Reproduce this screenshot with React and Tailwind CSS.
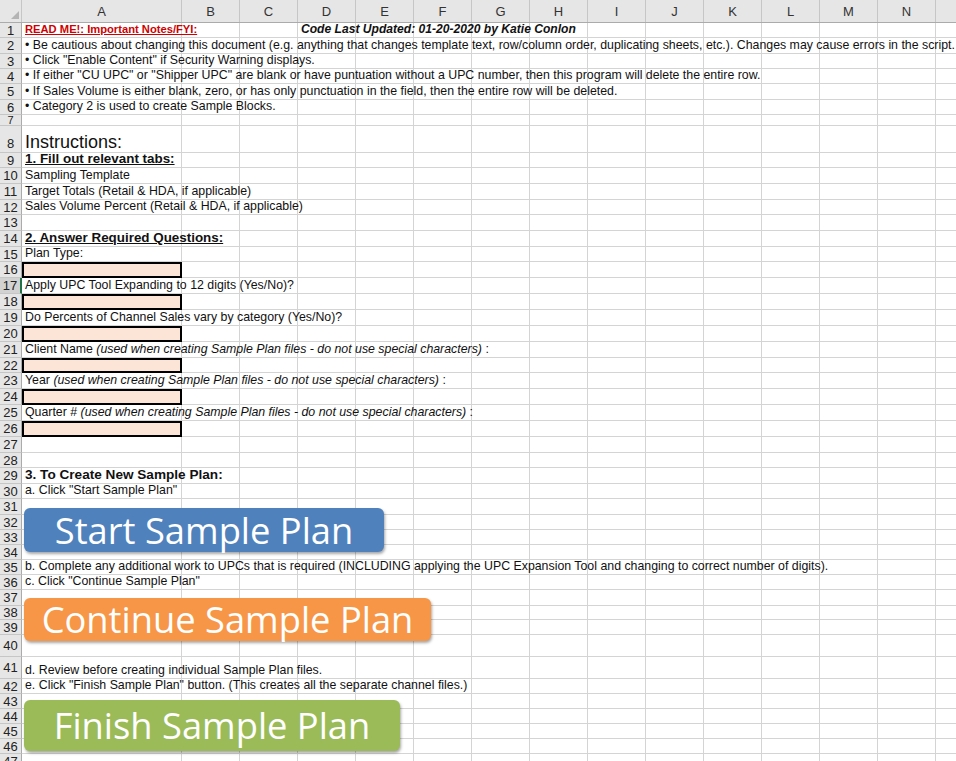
import React from 'react';

const COLS = ['B', 'C', 'D', 'E', 'F', 'G', 'H', 'I', 'J', 'K', 'L', 'M', 'N'];

const HEIGHTS = {
  11: 'h-[11px]',
  14: 'h-[14px]',
  15: 'h-[15px]',
  16: 'h-[16px]',
  22: 'h-[22px]',
  27: 'h-[27px]',
};

const it = (s) => <span className="italic">{s}</span>;

// row heights, top to bottom (rows 1..47)
const rowHeights = [
  15, 16, 15, 15, 16, 15, 11, 27, 15,
  16, 16, 15, 16, 16, 15, 16, 16,
  16, 16, 16, 16, 15, 16, 16, 16, 16,
  16,
  15, 16, 15, 16, 15, 15, 15, 15, 15, 16, 14, 15,
  22, 22,
  15, 15, 15, 15, 15, 15,
];

const inputRows = [16, 18, 20, 22, 24, 26];

const cells = {
  1: {
    A: <span className="font-bold underline text-[11.2px] text-[#d00000]">READ ME!: Important Notes/FYI:</span>,
    D: <span className="font-bold italic text-[12.1px]">Code Last Updated: 01-20-2020 by Katie Conlon</span>,
  },
  2: { A: '• Be cautious about changing this document (e.g. anything that changes template text, row/column order, duplicating sheets, etc.). Changes may cause errors in the script.' },
  3: { A: '• Click "Enable Content" if Security Warning displays.' },
  4: { A: '• If either "CU UPC" or "Shipper UPC" are blank or have puntuation without a UPC number, then this program will delete the entire row.' },
  5: { A: '• If Sales Volume is either blank, zero, or has only punctuation in the field, then the entire row will be deleted.' },
  6: { A: '• Category 2 is used to create Sample Blocks.' },
  8: { A: <span className="text-[18px] leading-[16px]">Instructions:</span> },
  9: { A: <span className="font-bold underline text-[13.4px]">1. Fill out relevant tabs:</span> },
  10: { A: 'Sampling Template' },
  11: { A: 'Target Totals (Retail & HDA, if applicable)' },
  12: { A: 'Sales Volume Percent (Retail & HDA, if applicable)' },
  14: { A: <span className="font-bold underline text-[13.4px]">2. Answer Required Questions:</span> },
  15: { A: 'Plan Type:' },
  17: { A: 'Apply UPC Tool Expanding to 12 digits (Yes/No)?' },
  19: { A: 'Do Percents of Channel Sales vary by category (Yes/No)?' },
  21: { A: <>Client Name {it('(used when creating Sample Plan files - do not use special characters)')} :</> },
  23: { A: <>Year {it('(used when creating Sample Plan files - do not use special characters)')} :</> },
  25: { A: <>Quarter # {it('(used when creating Sample Plan files - do not use special characters)')} :</> },
  29: { A: <span className="font-bold text-[13.6px]">3. To Create New Sample Plan:</span> },
  30: { A: 'a. Click "Start Sample Plan"' },
  35: { A: 'b. Complete any additional work to UPCs that is required (INCLUDING applying the UPC Expansion Tool and changing to correct number of digits).' },
  36: { A: 'c. Click "Continue Sample Plan"' },
  41: { A: 'd. Review before creating individual Sample Plan files.' },
  42: { A: 'e. Click "Finish Sample Plan" button. (This creates all the separate channel files.)' },
};

function CellText({ children }) {
  return (
    <span className="relative z-10 flex h-full items-end whitespace-nowrap bg-white pl-[3px] pr-[3px] pb-px leading-[14px]">
      <span>{children}</span>
    </span>
  );
}

function HeaderRow() {
  return (
    <div className="flex h-[23px] border-b border-[#ababab] bg-[#e6e6e6] text-[13px] text-[#333]">
      <div className="relative w-[22px] shrink-0 border-r border-[#c6c6c6]">
        <svg className="absolute left-[11px] top-[11px]" width="9" height="9" viewBox="0 0 9 9">
          <polygon points="0,8 8,0 8,8" fill="#b4b4b4" />
        </svg>
      </div>
      <div className="flex w-[160px] shrink-0 items-center justify-center border-r border-[#c6c6c6] pt-[2px]">A</div>
      {COLS.map((c) => (
        <div key={c} className="flex w-[58px] shrink-0 items-center justify-center border-r border-[#c6c6c6] pt-[2px]">
          {c}
        </div>
      ))}
      <div className="flex-1" />
    </div>
  );
}

function Row({ n, h }) {
  const row = cells[n] || {};
  const isInput = inputRows.includes(n);
  const active = n === 17;
  return (
    <div className={`flex ${HEIGHTS[h]}`}>
      <div
        className={
          active
            ? 'flex w-[22px] shrink-0 items-center justify-center border-b border-r-2 border-b-[#c6c6c6] border-r-[#217346] bg-[#d2d2d2] text-[13px] leading-none text-[#222]'
            : 'flex w-[22px] shrink-0 items-center justify-center overflow-hidden border-b border-r border-b-[#c6c6c6] border-r-[#ababab] bg-[#e6e6e6] text-[13px] leading-none text-[#222]'
        }
      >
        <span className={n === 8 ? 'pt-[8px]' : n === 7 ? 'text-[11px]' : ''}>{n}</span>
      </div>
      {isInput ? (
        <div className="w-[160px] shrink-0 border-2 border-black bg-[#fce4d6]" />
      ) : (
        <div className="w-[160px] shrink-0 border-b border-r border-[#d4d4d4] bg-white">
          {row.A && <CellText>{row.A}</CellText>}
        </div>
      )}
      {COLS.map((c) => (
        <div key={c} className="w-[58px] shrink-0 border-b border-r border-[#d4d4d4] bg-white">
          {row[c] && <CellText>{row[c]}</CellText>}
        </div>
      ))}
      <div className="flex-1 border-b border-[#d4d4d4] bg-white" />
    </div>
  );
}

function SheetButton({ className, children }) {
  return (
    <div
      className={`absolute flex items-center justify-center rounded-[6px] font-['Open_Sans',sans-serif] text-[36.3px] leading-none text-white shadow-[1px_2px_3px_rgba(0,0,0,0.35)] ${className}`}
    >
      {children}
    </div>
  );
}

export default function App() {
  return (
    <div className="relative h-[761px] w-[956px] overflow-hidden bg-white font-['Liberation_Sans',Arial,sans-serif] text-[12.35px] text-[#111]">
      <HeaderRow />
      {rowHeights.map((h, i) => (
        <Row key={i} n={i + 1} h={h} />
      ))}

      <SheetButton className="left-[24px] top-[508px] h-[44px] w-[360px] bg-[#4f81bd]">Start Sample Plan</SheetButton>
      <SheetButton className="left-[24px] top-[598px] h-[43px] w-[407px] bg-[#f79646]">Continue Sample Plan</SheetButton>
      <SheetButton className="left-[24px] top-[700px] h-[51px] w-[376px] bg-[#9bbb59]">Finish Sample Plan</SheetButton>
    </div>
  );
}
